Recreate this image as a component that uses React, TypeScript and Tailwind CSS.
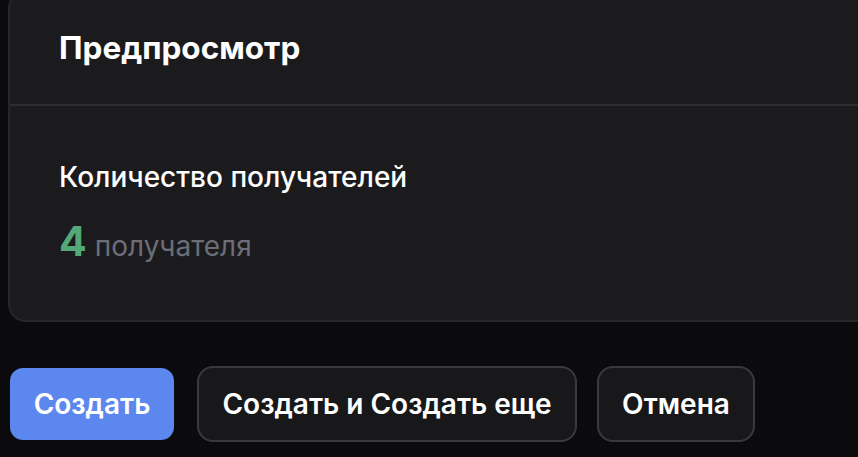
const App = () => {
  return (
    <div className="min-h-screen w-full overflow-hidden bg-[#0b0b0d] font-['Inter',sans-serif] text-white">
      {/* Карточка предпросмотра */}
      <div className="ml-[8px] mt-[-10px] w-[900px] rounded-[18px] border-2 border-[#262628] bg-[#1b1b1d]">
        <div className="h-[114px] border-b-2 border-[#2e2e30] pl-[49px] pt-[37px]">
          <h2 className="text-[31.5px] font-bold leading-[37px]">Предпросмотр</h2>
        </div>
        <div className="pl-[49px] pt-[54px] pb-[49px]">
          <p className="text-[28px] font-medium leading-[34px]">Количество получателей</p>
          <div className="mt-[22px] flex items-baseline gap-[8px] leading-[50px]">
            <span className="text-[41px] font-bold text-[#52a876]">4</span>
            <span className="text-[28px] text-[#6b6e78]">получателя</span>
          </div>
        </div>
      </div>

      {/* Кнопки */}
      <div className="mt-[44px] flex items-center pl-[10px]">
        <button className="h-[72px] w-[164px] rounded-[13px] bg-[#5c87ef] text-[28px] font-semibold">
          Создать
        </button>
        <button className="ml-[23px] h-[76px] w-[380px] rounded-[16px] border-2 border-[#3a3a3c] bg-[#18181a] text-[28px] font-semibold">
          Создать и Создать еще
        </button>
        <button className="ml-[20px] h-[76px] w-[158px] rounded-[16px] border-2 border-[#3a3a3c] bg-[#18181a] text-[28px] font-semibold">
          Отмена
        </button>
      </div>
    </div>
  );
};

export default App;
